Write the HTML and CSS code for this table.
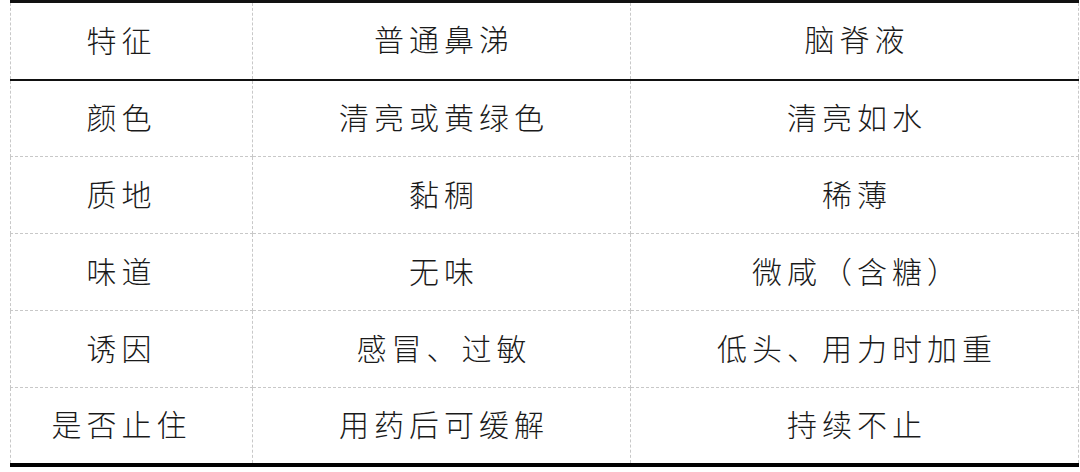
FILE: index.html
```html
<!DOCTYPE html>
<html lang="zh">
<head>
<meta charset="utf-8">
<link rel="stylesheet" href="styles.css">
</head>
<body>
<table class="cmp">
  <colgroup>
    <col class="c1"><col class="c2"><col class="c3">
  </colgroup>
  <thead>
    <tr><th class="k">特征</th><th>普通鼻涕</th><th>脑脊液</th></tr>
  </thead>
  <tbody>
    <tr><td class="k">颜色</td><td>清亮或黄绿色</td><td>清亮如水</td></tr>
    <tr><td class="k">质地</td><td>黏稠</td><td>稀薄</td></tr>
    <tr><td class="k">味道</td><td>无味</td><td>微咸（含糖）</td></tr>
    <tr><td class="k">诱因</td><td>感冒、过敏</td><td>低头、用力时加重</td></tr>
    <tr><td class="k">是否止住</td><td>用药后可缓解</td><td>持续不止</td></tr>
  </tbody>
</table>
</body>
</html>
```
FILE: styles.css
```css
html, body {
  margin: 0;
  padding: 0;
  background: #fff;
}
.cmp {
  margin-left: 10px;
  width: 1068px;
  border-collapse: collapse;
  table-layout: fixed;
  font-family: "Noto Sans CJK SC", sans-serif;
  font-weight: 300;
  font-size: 30px;
  color: #1a1a1a;
  border-top: 3px solid #111;
  border-bottom: 4px solid #000;
}
.c1 { width: 242px; }
.c2 { width: 378px; }
.c3 { width: 448px; }
.cmp th, .cmp td {
  font-weight: 300;
  text-align: center;
  vertical-align: middle;
  padding: 0 0 4px 5px;
  letter-spacing: 5px;
  border-left: 1px dashed #c8c8c8;
  border-right: 1px dashed #c8c8c8;
  border-bottom: 1px dashed #c8c8c8;
  line-height: 1;
}
.cmp th.k, .cmp td.k {
  padding: 0 20px 4px 0;
}
.cmp thead tr { height: 78px; }
.cmp thead th {
  border-bottom: 2px solid #111;
  padding-bottom: 6px;
}
.cmp tbody tr { height: 77px; }
.cmp tbody tr:last-child td { border-bottom: none; }
```
